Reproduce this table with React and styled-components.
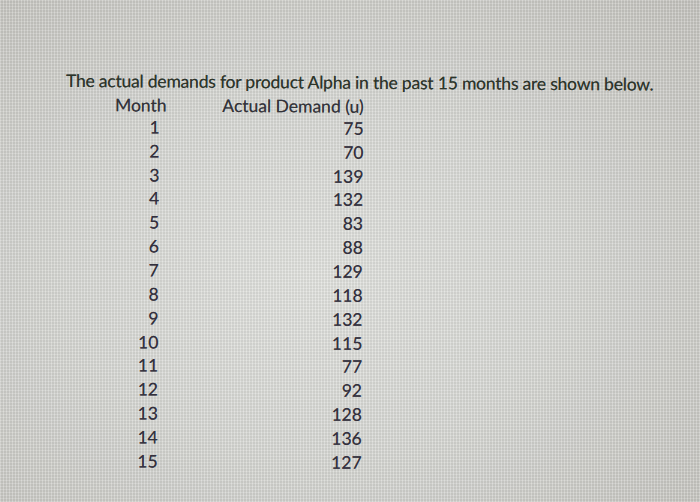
import React from 'react'
import styled, { createGlobalStyle } from 'styled-components'

const GlobalStyle = createGlobalStyle`
html, body {
  margin: 0;
  padding: 0;
  width: 700px;
  height: 502px;
  overflow: hidden;
}
`

const Screen = styled.div`
position: relative;
width: 700px;
height: 502px;
box-sizing: border-box;
padding: 70px 0 0 66px;
background:
  repeating-linear-gradient(90deg, rgba(255,255,255,0.16) 0 1px, rgba(0,0,0,0.035) 1px 3px),
  repeating-linear-gradient(0deg, rgba(255,255,255,0.12) 0 1px, rgba(0,0,0,0.03) 1px 3px),
  radial-gradient(ellipse at 45% 55%, #e1e2de 0%, #d7d8d4 45%, #c4c3be 100%);
font-family: Lato, "Open Sans", sans-serif;
color: #34333a;
`

const Sheet = styled.div`
display: flex;
flex-direction: column;
transform: rotate(0.35deg);
transform-origin: 0 0;
`

const Title = styled.div`
font-size: 17.5px;
line-height: 21px;
height: 21px;
letter-spacing: -0.2px;
white-space: nowrap;
color: #2c3529;
text-shadow: 0 0 0.6px rgba(40,40,50,0.6);
`

const Table = styled.div`
display: grid;
grid-template-columns: 50px 202px;
grid-auto-rows: 23.86px;
margin-left: 50px;
font-size: 17.5px;
line-height: 23.86px;
text-shadow: 0 0 0.6px rgba(40,40,50,0.6);
`

const Head = styled.div`
padding-right: ${(props) => props.pad}px;
white-space: nowrap;
color: #333339;
line-height: 21px;
display: flex;
align-items: flex-end;
justify-content: ${(props) => (props.align === 'center' ? 'center' : 'flex-end')};
`

const Cell = styled.div`
text-align: right;
padding-right: ${(props) => props.pad}px;
color: #33303d;
`

const demand = [75, 70, 139, 132, 83, 88, 129, 118, 132, 115, 77, 92, 128, 136, 127]

const App = () => {
    return (
        <>
        <GlobalStyle />
        <Screen>
            <Sheet>
                <Title>The actual demands for product Alpha in the past 15 months are shown below.</Title>
                <Table>
                    <Head align="center" pad={0}>Month</Head>
                    <Head align="right" pad={4}>Actual Demand (u)</Head>
                    {demand.map((d, i) => (
                        <React.Fragment key={i}>
                            <Cell pad={6}>{i + 1}</Cell>
                            <Cell pad={4}>{d}</Cell>
                        </React.Fragment>
                    ))}
                </Table>
            </Sheet>
        </Screen>
        </>
    )
}

export default App
